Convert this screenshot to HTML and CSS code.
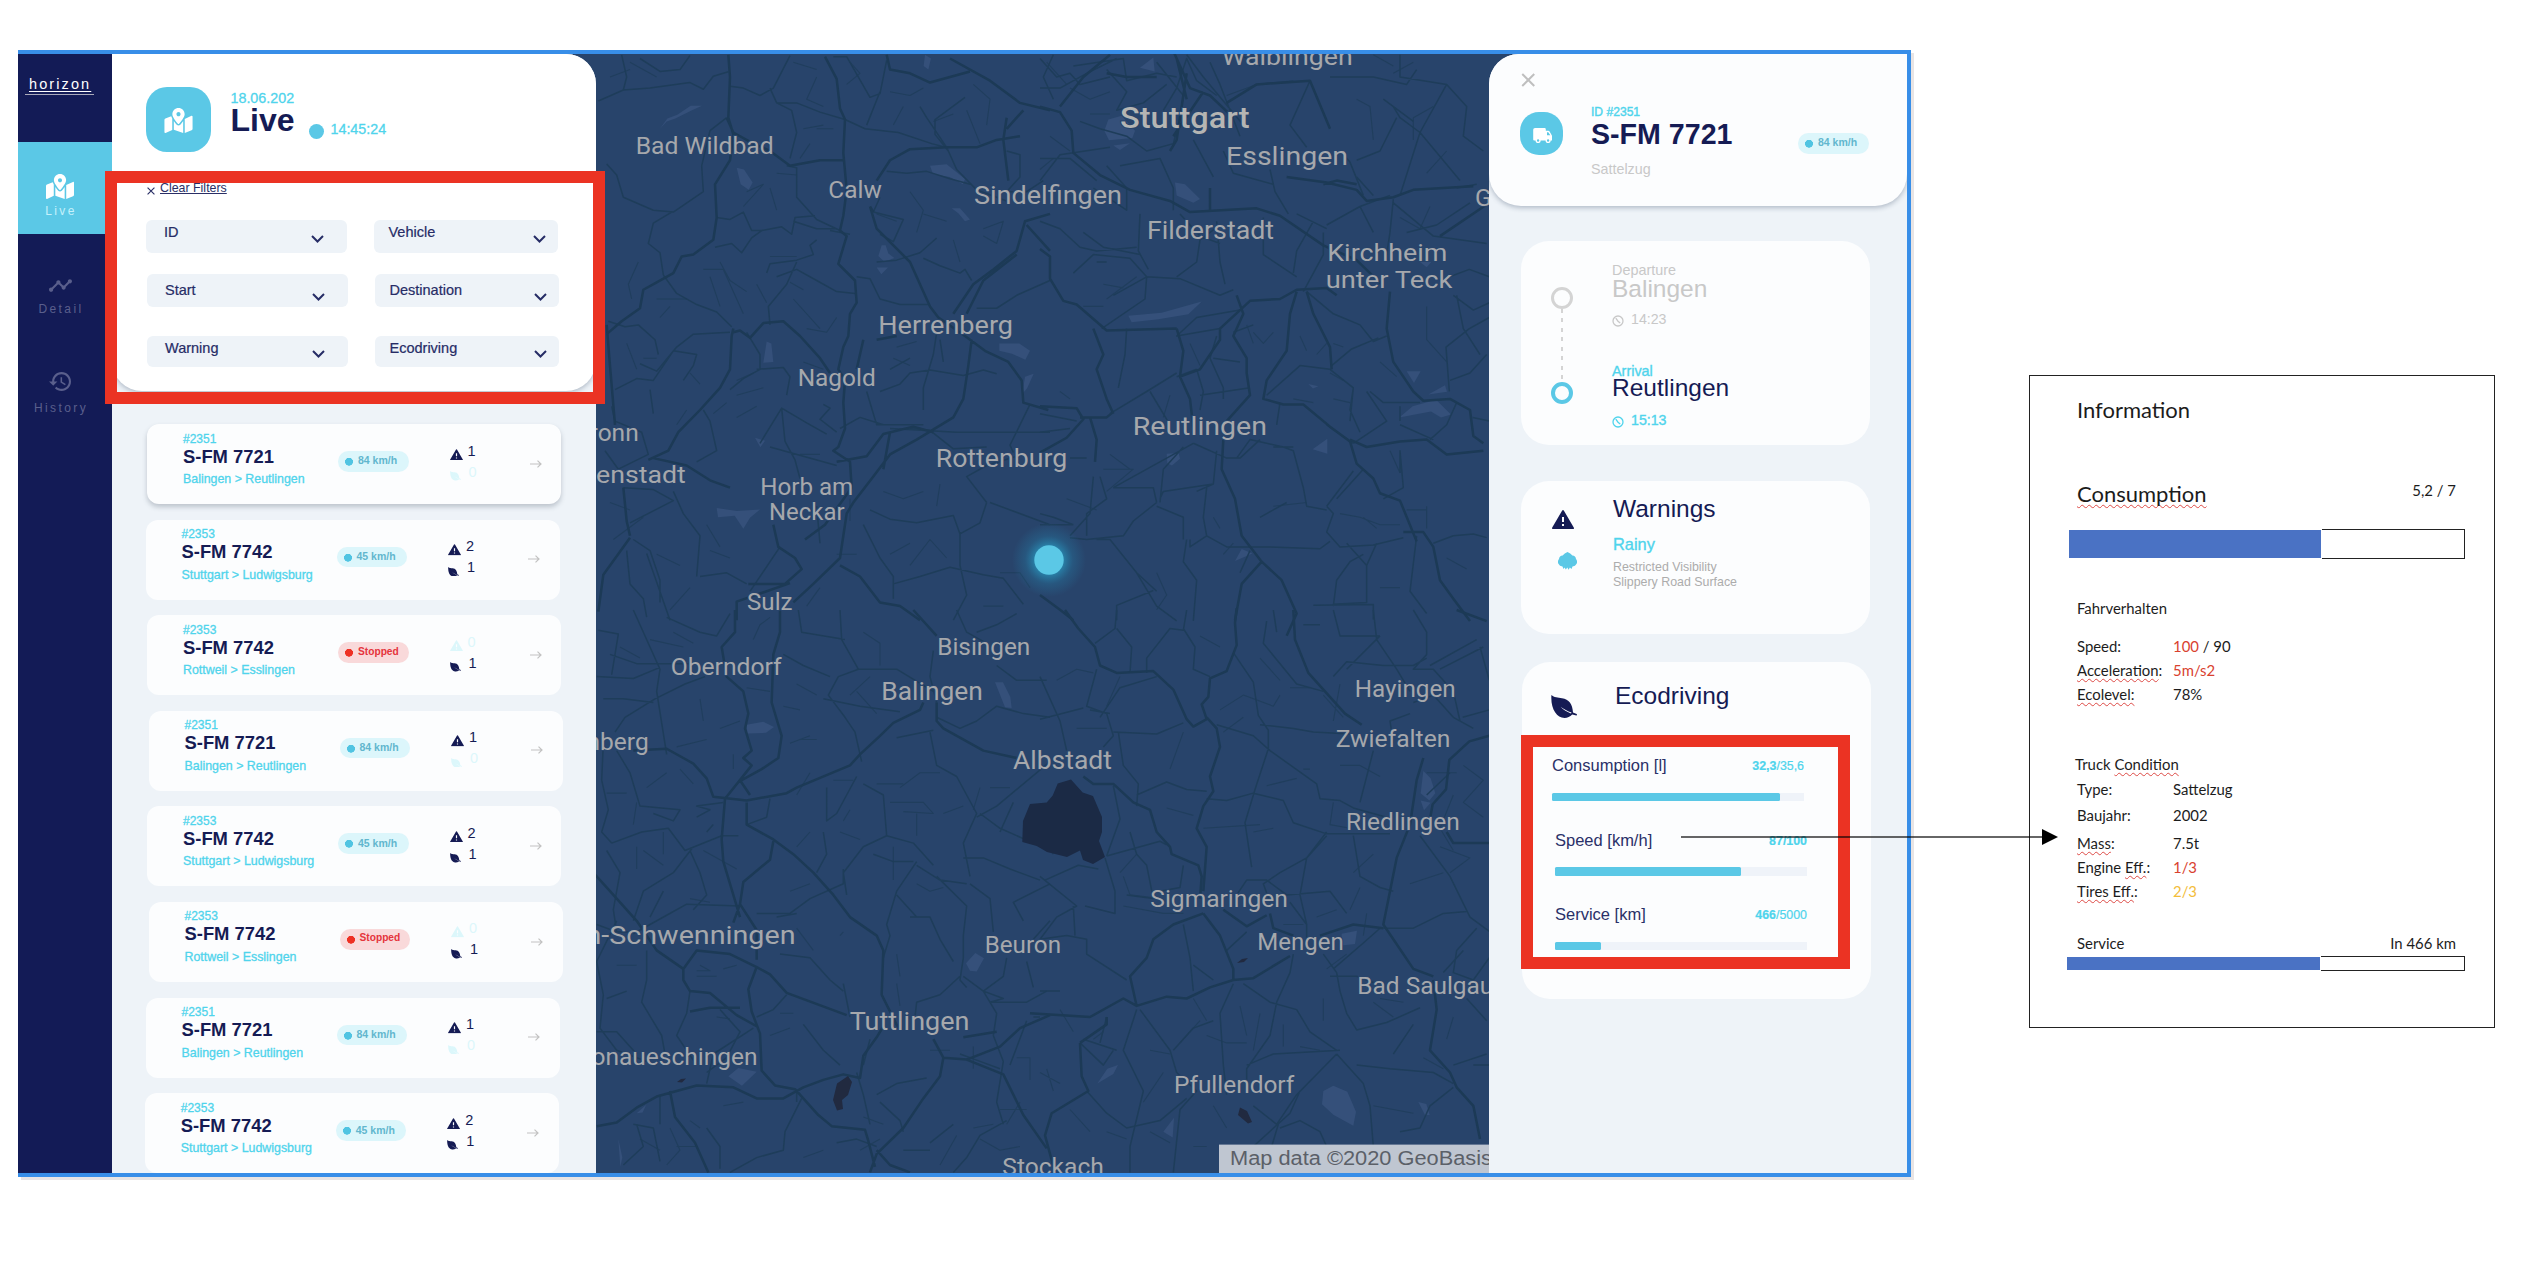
FILE: index.html
```html
<!DOCTYPE html>
<html lang="en">
<head>
<meta charset="utf-8">
<title>horizon – Live</title>
<link rel="stylesheet" href="styles.css">
</head>
<body>
<svg class="defs" width="0" height="0" aria-hidden="true">
  <symbol id="i-map" viewBox="0 0 576 512"><path d="M288 0c-69.59 0-126 56.41-126 126 0 56.26 82.35 158.8 113.9 196.02 6.39 7.54 17.82 7.54 24.2 0C331.65 284.8 414 182.26 414 126 414 56.41 357.59 0 288 0zm0 168c-23.2 0-42-18.8-42-42s18.8-42 42-42 42 18.8 42 42-18.8 42-42 42zM20.12 215.95A32.006 32.006 0 0 0 0 245.66v250.32c0 11.32 11.43 19.06 21.94 14.86L160 448V214.92c-8.84-15.98-16.07-31.54-21.25-46.42L20.12 215.95zM288 359.67c-14.07 0-27.38-6.18-36.51-16.96-19.66-23.2-40.57-49.62-59.49-76.72v182l192 64V266c-18.92 27.09-39.82 53.52-59.49 76.72-9.13 10.77-22.44 16.95-36.51 16.95zm266.06-198.51L416 224v288l139.88-55.95A31.996 31.996 0 0 0 576 426.34V176.02c0-11.32-11.43-19.06-21.94-14.86z"/></symbol>
  <symbol id="i-leaf" viewBox="0 0 26 23"><path fill-rule="evenodd" d="M.4 0C3 2.600 7 2.600 11 3.200c7 1 10.500 5.800 11 14.300l3.700 1.500q.6.900-.3 1.600l-4.200-1C19 22 16.500 23 13.500 23 5.500 22.500-.5 14 .4 0zM9.500 11.800c2.500 2.600 6 5 10.500 6.800l.5-1c-4-1.400-7.500-3.300-11-5.800z"/></symbol>
  <symbol id="i-warn" viewBox="1 2 22 19"><path d="M1.6 21h20.8q.9-.3.5-1.200L12.800 2.600q-.8-1.200-1.600 0L1.100 19.800q-.3.900.5 1.200zm11.400-3h-2v-2h2v2zm0-4h-2v-5h2v5z"/></symbol>
  <symbol id="i-line" viewBox="1 6 22 12"><path d="M23 8c0 1.1-.9 2-2 2-.18 0-.35-.02-.51-.07l-3.56 3.55c.05.16.07.34.07.52 0 1.1-.9 2-2 2s-2-.9-2-2c0-.18.02-.36.07-.52l-2.55-2.55c-.16.05-.34.07-.52.07s-.36-.02-.52-.07l-4.55 4.56c.05.16.07.33.07.51 0 1.1-.9 2-2 2s-2-.9-2-2 .9-2 2-2c.18 0 .35.02.51.07l4.56-4.55C8.02 9.36 8 9.180 8 9c0-1.1.9-2 2-2s2 .9 2 2c0 .18-.02.36-.07.52l2.55 2.55c.16-.05.34-.07.52-.07s.36.02.52.07l3.55-3.56C19.02 8.35 19 8.18 19 8c0-1.1.9-2 2-2s2 .9 2 2z"/></symbol>
  <symbol id="i-history" viewBox="1 3 21 18"><path d="M13 3c-4.97 0-9 4.03-9 9H1l3.89 3.89.07.14L9 12H6c0-3.87 3.13-7 7-7s7 3.13 7 7-3.13 7-7 7c-1.93 0-3.68-.79-4.94-2.06l-1.42 1.42C8.27 19.99 10.51 21 13 21c4.97 0 9-4.03 9-9s-4.03-9-9-9zm-1 5v5l4.28 2.54.72-1.21-3.5-2.08V8H12z"/></symbol>
  <symbol id="i-chev" viewBox="0 0 13 8"><path d="M1 1l5.500 5.500L12 1" fill="none" stroke="currentColor" stroke-width="2"/></symbol>
  <symbol id="i-x" viewBox="0 0 14 14"><path d="M1 1l12 12M13 1L1 13" fill="none" stroke="currentColor" stroke-width="2"/></symbol>
  <symbol id="i-arrow" viewBox="0 0 12 8"><path d="M0 4h11M7.500 .6L11 4 7.500 7.400" fill="none" stroke="currentColor" stroke-width="1.200"/></symbol>
  <symbol id="i-truck" viewBox="0 0 19 15"><path fill-rule="evenodd" d="M2 0h9.500q1.300 0 1.300 1.300V2.800h2.500q.8 0 1.300.7L18.600 7q.4.500.4 1.100v4.400h-1.300a2.600 2.600 0 0 1-5.200 0H7.700a2.600 2.600 0 0 1-5.200 0H1.300Q.2 12.500.2 11.400V1.800Q.2 0 2 0zM14 4.300v3h3.300L15.300 4.300zM5.100 11.300a1.200 1.200 0 1 0 0 2.400 1.200 1.200 0 0 0 0-2.400zM15.100 11.300a1.200 1.200 0 1 0 0 2.400 1.200 1.200 0 0 0 0-2.400z"/></symbol>
  <symbol id="i-clock" viewBox="0 0 12 12"><path d="M6 1a5 5 0 1 0 0 10A5 5 0 0 0 6 1zM3.800 3.200L6 6.200l2.200 1.800" fill="none" stroke="currentColor" stroke-width="1.300"/></symbol>
  <symbol id="i-rain" viewBox="0 0 19 18"><path d="M4.500 14.500A4.600 4.600 0 0 1 1 7 4 4 0 0 1 4.600 3.500 Q6.500 1 9.500 0 Q12.500 1 14.400 3.500 A4 4 0 0 1 18 7a4.600 4.600 0 0 1-3.500 7.500l-1 2.500-1.600-1.500-1.300 2.300-1.300-2.300-1.500 2-1.200-2-1.100 1.500z"/></symbol>
</svg>

<main class="board">
  <section class="window">
    <nav class="nav">
      <div class="logo"><span>horizon</span></div>
      <a class="nav-item active"><svg class="ic-map"><use href="#i-map"/></svg><span>Live</span></a>
      <a class="nav-item detail"><svg class="ic-line"><use href="#i-line"/></svg><span>Detail</span></a>
      <a class="nav-item history"><svg class="ic-hist"><use href="#i-history"/></svg><span>History</span></a>
    </nav>

    <section class="side">
      <header class="side-head">
        <div class="live">
          <div class="live-icon"><svg><use href="#i-map"/></svg></div>
          <div class="live-title"><span class="date">18.06.202</span><h1>Live</h1></div>
          <i class="live-dot"></i><span class="time">14:45:24</span>
        </div>
        <div class="clear"><svg><use href="#i-x"/></svg><u>Clear Filters</u></div>
        <div class="frow r1"><div class="sel">ID<svg><use href="#i-chev"/></svg></div><div class="sel b">Vehicle<svg><use href="#i-chev"/></svg></div></div>
        <div class="frow r2"><div class="sel">Start<svg><use href="#i-chev"/></svg></div><div class="sel b">Destination<svg><use href="#i-chev"/></svg></div></div>
        <div class="frow r3"><div class="sel">Warning<svg><use href="#i-chev"/></svg></div><div class="sel b">Ecodriving<svg><use href="#i-chev"/></svg></div></div>
      </header>
      <div class="list">
        <article class="card selected"><div class="veh"><span>#2351</span><b>S-FM 7721</b><span class="route">Balingen &gt; Reutlingen</span></div><div class="pill">84 km/h</div><div class="counts"><p><svg class="w"><use href="#i-warn"/></svg>1</p><p class="off"><svg class="l"><use href="#i-leaf"/></svg>0</p></div><svg class="go"><use href="#i-arrow"/></svg></article>
        <article class="card nl"><div class="veh"><span>#2353</span><b>S-FM 7742</b><span class="route">Stuttgart &gt; Ludwigsburg</span></div><div class="pill">45 km/h</div><div class="counts"><p><svg class="w"><use href="#i-warn"/></svg>2</p><p><svg class="l"><use href="#i-leaf"/></svg>1</p></div><svg class="go"><use href="#i-arrow"/></svg></article>
        <article class="card"><div class="veh"><span>#2353</span><b>S-FM 7742</b><span class="route">Rottweil &gt; Esslingen</span></div><div class="pill stop">Stopped</div><div class="counts"><p class="off"><svg class="w"><use href="#i-warn"/></svg>0</p><p><svg class="l"><use href="#i-leaf"/></svg>1</p></div><svg class="go"><use href="#i-arrow"/></svg></article>
        <article class="card nr"><div class="veh"><span>#2351</span><b>S-FM 7721</b><span class="route">Balingen &gt; Reutlingen</span></div><div class="pill">84 km/h</div><div class="counts"><p><svg class="w"><use href="#i-warn"/></svg>1</p><p class="off"><svg class="l"><use href="#i-leaf"/></svg>0</p></div><svg class="go"><use href="#i-arrow"/></svg></article>
        <article class="card"><div class="veh"><span>#2353</span><b>S-FM 7742</b><span class="route">Stuttgart &gt; Ludwigsburg</span></div><div class="pill">45 km/h</div><div class="counts"><p><svg class="w"><use href="#i-warn"/></svg>2</p><p><svg class="l"><use href="#i-leaf"/></svg>1</p></div><svg class="go"><use href="#i-arrow"/></svg></article>
        <article class="card nr"><div class="veh"><span>#2353</span><b>S-FM 7742</b><span class="route">Rottweil &gt; Esslingen</span></div><div class="pill stop">Stopped</div><div class="counts"><p class="off"><svg class="w"><use href="#i-warn"/></svg>0</p><p><svg class="l"><use href="#i-leaf"/></svg>1</p></div><svg class="go"><use href="#i-arrow"/></svg></article>
        <article class="card nl"><div class="veh"><span>#2351</span><b>S-FM 7721</b><span class="route">Balingen &gt; Reutlingen</span></div><div class="pill">84 km/h</div><div class="counts"><p><svg class="w"><use href="#i-warn"/></svg>1</p><p class="off"><svg class="l"><use href="#i-leaf"/></svg>0</p></div><svg class="go"><use href="#i-arrow"/></svg></article>
        <article class="card nl2"><div class="veh"><span>#2353</span><b>S-FM 7742</b><span class="route">Stuttgart &gt; Ludwigsburg</span></div><div class="pill">45 km/h</div><div class="counts"><p><svg class="w"><use href="#i-warn"/></svg>2</p><p><svg class="l"><use href="#i-leaf"/></svg>1</p></div><svg class="go"><use href="#i-arrow"/></svg></article>
      </div>
    </section>

    <svg class="map" viewBox="596 54 893 1119">
      <defs><radialGradient id="glow"><stop offset=".35" stop-color="#2a9cc4" stop-opacity=".75"/><stop offset=".65" stop-color="#2583ad" stop-opacity=".3"/><stop offset="1" stop-color="#2583ad" stop-opacity="0"/></radialGradient></defs>
      <!-- built-up and forest patches -->
      <g fill="#35507a">
        <g transform="translate(590 40) scale(.33333 .37)">
          <path d="M210 240l22-28 30-10 40-24 34 0-30 12-50 22-26 8zM440 345l22 5 26 35-12 20-24-15zM1020 340l50-4 55 40-6 14-40-20-50-8zM1085 455l25 0 30 30-15 5-20-22zM875 555l12 0 8 22 18 12-30 10-18-15zM860 615l34 0-20 18zM530 815l14 5 6 50-30 2zM1228 820l60 0 32 20-14 24-40-16-38-8zM1305 910l26-8-20 40-14 14zM380 1265l60 8 70-4-30 22-20 30-26-35-50 4zM495 1075l30 8-14 18zM1005 40l18 10-8 30-14-10z"/>
        </g>
        <g transform="translate(1040 40) scale(.33333 .37)">
          <path d="M300 75l40-28 4 38zM205 215l40-10 40 40-8 20-70 6-14-26zM220 285l50-6-30 18zM405 385l30 5 45 40-20 10-50-20zM265 745l100-8 120-30-40 34-90 14-80 8zM1100 895l42 0-20 32zM1165 958l50-25 6 18zM1078 1020l40-30 70-18 45 40-30 8-30-16-60 10zM818 1106l44-28 0 40zM380 1118l36-2 4 16-24 18-14-6zM805 930l30 6-16 6zM585 1408l20-32 32 12zM1140 600l34 0-14 14z"/>
        </g>
        <g transform="translate(590 610) scale(.33333 .37)">
          <path d="M1215 195l24 0 22 40 4 30-20-2zM470 310l50-8 32 14-24 16-56 2zM1128 955l28-28 26 14-22 36-20-2zM415 1260l30-22 55 10-44 38zM140 1360l28-22-10 20zM85 1430l12 50-6 25z"/>
        </g>
        <g transform="translate(1040 610) scale(.33333 .37)">
          <path d="M1150 435l22 20 14 40-18 20-26-20zM1142 515l30 6-20 20zM850 1300l30-14 42 16 26 54-8 38-60-30-34-28zM172 1280l30-40 32-10-14 24zM370 1410l32-38-4 54zM905 875l46-8-6 36-40 4zM1135 1330l24 5 10 30-14 0z"/>
        </g>
      </g>
      <!-- minor roads -->
      <g class="minor">
        <g transform="translate(590 40) scale(.33333 .37)">
          <path d="M95 40l15 60-10 35-75 30M100 135l80-5 120-15 40 18 30-35 45-12M150 50l60 35 60-5 30-38M420 125l40 5 50 20 40-20 50-88M540 130l20 40 45 20 15 60-20 70M560 170l60 0 70 25 75 20 60 25 100 10 100 30 50 12M730 45l40 0 70 110 30-10 20-90M830 230l40-90M590 340l30 5 0 80 60 60 70 30M410 210l-50 35-25 95 5 70-90 55-60-5-90-35-20-60-30-30M245 465l-55 30-15 55 35 25 10 60M220 635l40 50 60 30 60 20 45 40M380 480l40 5 40-20 25 50 30 0 60-10 30 20 10-45 60-5M610 490l70 20 60 0M375 560l50-10 30 25 30-40 30-20M680 540l-20 15 10 25-50 15-80 10-10 25M620 600l-30 60-55 60 5 50M560 640l60-20 60 30 60 30 55 5M720 515l60 10M870 425l-20 40 90 20-30 60-40-20M890 355l60 5 60-5 70 20 60 15M1000 590l50 20 60 20 15-10 20 30M860 600l60-5 70-20 50-40M800 640l40 5 30 55 60 15 90 0M1075 300l-40-45 0-40 90-60M990 180l20 30 60 80M1070 290l30 60 60 55 90 30M1250 300l40 10 0 60-40 40 60 0 50-30M1380 650l-100 40-60 35-60 0"/>
          <path d="M55 760l50 15 40-5 50 40 10 40M420 790l-110 5-50 35-60 65-50-20M250 840l70 10-10 30-30 40M500 890l80-5 20 25-10 50M420 945l40-30 50-25 0-40-40-60M75 945l65-30 50 5 60-80M340 1000l20 30 20 80-60 30M510 1090l65-95 75 40 60 30M575 995l10 90 30 50 15 50M190 1010l-10-65M45 1110l40 50 90-40-20-60-80-30-10-40M700 985l20 10-30 30 50 35M870 950l60-20 30-30 60-8 100 15 60-15 40 10M1000 1000l0-60 30-90 10-60M1060 870l-10-60M960 860l-60 30M830 950l30 90 140 0M900 1050l200 10 280 0M1320 985l-60 110 10 20M960 1050l60 5 70 50 100-5M1190 1250l-60-70 60-30 90-25M1200 1250l180 60M1190 1250l-20 55-60 30-20-50-110 20-80-10-60-25M1110 1330l0 90 20 80-40 68M820 1310l50 90 40 50 0 60M910 1470l80-20 90-25 100 20 60 10 60 70M250 1220l30 60 50 60-10 110M100 1210l90 5 60 30-130 60M130 1350l50 30 30 80 0 60M110 1380l10 90 40 40 10 50M330 1450l80-10 60 30M680 1260l10 100M570 1370l-90 120M240 1568l-70-180M540 1100l200 50M880 1040l-70-20-60 30"/>
          <path class="t" d="M60 100l60-20M120 60l80 40M680 100l-30 60 50 20M610 60l70 20M780 60l30 30-40 30M900 140l60 10 40-20M940 180l-30 50M1150 120l50 40-10 70M1090 200l-60 20M1130 190l40 90M680 240l50 0M660 280l-30 40M560 360l60 5M540 400l20 60M470 410l50-20-60 60M640 240l60-10M960 410l40 50-20 60M860 470l60 20M1000 470l70 20M1090 540l20 60M1180 510l60-20-20 60-40-20M145 600l-30 60 10 40M340 620l60 0 60 120M360 640l30 80M500 660l30 50M390 600l30 50 50 30M610 700l80 80M650 780l60 10 30-40M540 585l80 0M600 655l40 20M200 700l90 0M240 720l-30 30M110 820l30 70M160 860l40 0M490 900l-50 20M520 940l-80 20M300 900l30 30M290 1000l-30 40M370 1010l40-30M440 1020l60-30M910 860l50 20M920 830l60-15M60 1250l60 20M160 1290l-90 60M350 1310l40 60M360 1380l60 20M200 1390l70 30M880 1220l60 20 60-20M1040 1260l10-60M900 1390l60-30M960 1420l60-70 50 50M740 1390l60 0M690 1480l-40 50M300 1480l-60 60M780 1300l0-60M1230 1440l60 0 30 40M1180 1530l60 0M690 1120l-60 0M640 870l60 20"/>
        </g>
        <g transform="translate(1040 40) scale(.33333 .37)">
          <path d="M0 50l50 50 40-10 30 30 90-20M40 40l-30 60 30 60M0 130l60 0 80-40 90-40M100 70l150-20 10 60 90-20 60 10M200 80l60 60-30 50 80-20 70-50M370 190l40-60 30-80 30 60 60 40M350 60l80 90-10 60-20 70-80 20-60-40-80-20-60-20M440 40l50 60 120 130M510 60l30 60 60 140M460 270l60 100M550 300l30 60 120 30M690 350l15 60 40 60M870 100l130 0 100 20 30-40M0 320l90 0 80 60M200 340l60 60 0 60-100-60M240 340l120-20 40 80 0 60M0 490l60 20 60 50 50 10 120-10M0 380l60-70 150-20M130 520l60 40 110 20M100 630l60-50 110 10 50 50-100 50M170 600l30 0M320 640l-5 60-130 80M320 640l100 5 120 45 40-15M300 470l-5 100 30 50M410 640l60-40 10-60 60-40M530 490l10 110 15 60M420 470l60 60 60 20M670 480l0 100 100 60M820 490l-50 80-10 60M850 520l0 60-60 100M800 680l80 60 80 30 40 45 40-15M875 880l60-45 80-30M770 470l90 40M960 450l40 70M860 500l100-50 90-30M1060 430l-10 90-10 60M970 420l-40-90-30-30M950 325l70-25 50-90M1060 180l20 30 60 40 120 130M1030 160l90 60M810 110l-60 120 50 60M950 370l50 50M1140 250l-60 170M1220 120l-80 130M1080 40l0 60 140 20 60 60-10 80 60 40M1250 400l60-10M1060 440l120 90 160 20M1100 520l90-20 100-60M1250 690l20 90 50 70M1348 640l-60-20-90 30M1240 690l60 40 48-20M1348 750l-60 30-70 50 10 120M1230 920l60-20 50-50"/>
          <path d="M260 780l-5 70-20 90M410 900l-90 50-110 60M330 950l60 90M470 890l20 60-10 50M480 960l150-20M530 800l-20 60 40 80 0 30M410 910l60-20M520 860l80 10M580 790l60-20M540 780l-130 20 60-50 130-20M680 960l100-80 90 10 70 50-10 90M720 980l-10 60M990 950l40 30 110 0M940 940l-10 60 30 60M940 1090l100-60-60-80M860 1040l80 50M1080 1040l100 40M1080 990l0 40M1250 980l-30 60-50 40M1348 1030l-50-10M460 1090l100 40 40 0 60-50M590 1130l40-50 100 20 30 10 30 100 10 50 60 10M700 1100l60 0M530 1110l-10 90-50 20M520 1200l-150 20-10 20M430 1100l-60 60-10 90M460 1090l-240 120M220 1210l120 0 10 40M350 1250l-70 50-30 40-110 10-50-5M350 1260l80 30 0 60M500 1210l-10 80 10 50-50 30 0-20M440 1350l-10 60 40 50-10 110M500 1340l60 30 130 0 150 5 30-20M860 1260l20 20-20 50 40 40 100-5 90-20M940 1165l-80 95M970 1160l-80 80M660 1290l80-40M920 1360l60 60 30-60M880 1530l10-70 40-50 40-20M980 1420l0 100-100 5M1080 1170l0-60 10 100-60 30M1130 1340l-20 150 50 60M1180 1360l60-20 60-5 40 10M170 1350l40 0 80 90 60 50M290 1440l60 90 60 40M230 1568l0-40 110-40M600 1440l30-60M820 1528l180-2 0 40M0 1310l100 0M0 1010l110 20M0 1060l90-10M90 1130l50 0M160 1180l-10 100-60 60M180 1180l20 60-60 40 0 60M0 1280l40 10 60 20"/>
          <path class="t" d="M20 60l60 60M90 130l60 30 60-20M150 200l60 0M30 260l60 40M0 350l40-30M560 150l90-30 110-10M600 40l60 30M950 160l40 20 10 90M1000 40l60 30M1120 60l-60 30M1180 180l-60 30 0 60M1220 300l-60 60M1080 480l60 30 30-60M190 660l60 10M290 640l-90 60M130 720l60 0M450 820l30 60M640 790l30 30 30-30M620 770l20 50M780 800l20 40M880 820l30 10M830 850l30-30M1160 720l0 90 60 60M1020 870l50 40M870 900l40 20M60 950l30 20M390 960l-20 60M760 970l60 10M880 970l50 10M190 1160l90 0-80 60M210 1120l60 40M700 1260l100-10M900 1280l60 10 60 20 60 0M970 1290l40 30M1100 1270l60 0M1160 1260l0 60M1050 1110l30 60M350 1440l30 60-30 40M1020 1480l60 0M1220 1400l60 30M520 1290l20 30M550 1390l30-30M80 1240l90 30"/>
        </g>
        <g transform="translate(590 610) scale(.33333 .37)">
          <path d="M130 0l50 100 30 60-10 60 30 170M25 55l60 10-20 110M60 120l80 25 160 0M20 180l110 5 80-30M75 330l30-40 90-50 90-40 60-20M40 240l60 0 90 10M230 20l100 40 50 10 40-60M625 0l10 60 130 20M750 0l5 80 50 80-60 20-30 50 50 60 30 40 20 80M580 120l60 30 80 30M800 160l120 0 110 60M700 240l110 20 120 15M920 345l110-20M1030 110l-10 70 20 70M1100 0l30 60 60 30M1160 60l60-20 60-30M1220 150l60 40 90 0M1040 290l70 30 50-20 60-40 80 20 80 10M1020 330l20 90 60 30 60 100-40 80 20 90M1160 560l60-30 160-120M1380 650l-150-60-60-40M1230 600l40-80M40 360l-5 100 20 80-20 60 30 30M80 380l40 60 30 90 120 10-20 30-60-20M65 630l90-30 80-10 50 60 110-40 50 0M50 650l40 60-20 100 10 60M300 650l30 60 20 60-40 40M310 640l-60 70-90 50-30 80M320 560l40-20-40-10 80-10M350 600l20-20M540 510l-10 50-60 20M710 480l0 90 30-20 60-100M820 470l60 30 10 110 80 20 60 60M890 610l-70 30-60 70 10 60M700 600l10 60-30 50M760 700l0 40-100 40-60 40-100 0M450 800l-160-5-60 30-100 50M850 660l60 20 60 0M980 690l70 40 80 10M980 680l-60 80-30 90 10 30-20 60M1040 720l90 80-10 80 0 60-10 60 20 20M920 770l60 60M960 830l60 0 30 60 40 60M1120 670l60 0 80 30 90 30M1380 740l-110 50 30 50M1140 740l60 40 10 90M1380 840l-50 50M1110 990l-60 50-70 20-5 40M1120 990l60 40 40 60-10 60 30 70M1180 1030l60 20-40 10 110 0 60-30M1250 940l-10 50-60 40M1240 1220l-20 110 20 60M1110 1200l60 20 60 20M860 1310l60-30 90-15M870 1330l60 50 10 30M800 1250l20 60 20 80M740 1440l60-10 60 20M1130 1480l40-60 80-40M1020 1440l70-50M1130 1480l-40 40M940 1460l80 0"/>
          <path d="M170 920l0 80-15 60 60 90 10 50M80 840l-60 110 20 90-10 90 50 60 120 40M20 1140l60 0 60 60M50 1050l60-20M300 1030l-10 60-30 60 60 80M500 1100l50-20 40-40M570 930l90 10 60 60 40 30M760 1010l20 90M350 1280l20-80 120-70M635 1320l-50 90-5 50-80 20-80 40M210 1310l0 80M130 1390l60 10 20 90M640 1120l60 70 50 40M20 850l60 20 60 0M180 830l40-70M560 830l60-10M350 1250l60-40 40-70-60-60M100 1500l60-50-20-60M350 1400l40 50 0 60M620 1300l0 30M820 1230l20-70M1310 950l20 70M1310 1110l-50 120"/>
          <path class="t" d="M90 100l60 30M180 80l100 20M250 60l60 30M490 80l20-40 30-20M820 60l50 30 0 60M840 180l-60 50M800 220l60 60M620 200l60 30M580 260l50 10M600 360l60-20M470 210l70 10M330 240l10 60M260 370l90-20M390 320l60-20M270 430l40 40M230 440l-60 40M430 390l0 40M50 495l60 0M130 580l10-60M630 350l50 0M660 440l-40 60M730 460l60 0M750 600l60 20M780 540l-20 30M620 640l40-40M860 470l80 0M930 480l60-40 60 0M900 520l100 0 30 30-90-5M1060 550l60-20M980 550l0 60M910 640l0 90M980 740l40 20 40-10M1200 480l60 0M1170 480l-20 60M600 760l60-20M620 860l50 60M220 600l0 60M140 640l0 60M160 650l60 40M340 650l100 50M300 780l60 10M80 960l60 0M330 960l30 15-40 0M320 990l60 0M400 970l40-10M380 1100l40 5M570 1090l40 0M540 1150l60-20M640 1480l60-20M240 1400l30 60-40 40M150 1430l60 30M260 1450l60 0M300 1380l30 20M400 1340l60-10M820 1370l60 20M870 1430l-60 30M920 1010l10 60M1020 1190l60 0M1280 1210l40 0 0 60M1290 1330l-40 60M1170 1430l60 30 60-10M1150 1240l0-60M1100 1420l-50 80M920 930l10 60M750 880l10-10M1130 1100l-60 20M1150 1400l60-10M1230 1350l80 0"/>
        </g>
        <g transform="translate(1040 610) scale(.33333 .37)">
          <path d="M230 0l-5 50-60 40M230 50l45 50-5 70M440 0l-10 55-40-5-70 80 0 40M430 50l35 50-5 60 50 20M170 160l-30 100 60 20 20 60-30 30M0 295l130-30M150 270l60 10M0 180l60 120 20 80M180 290l60-80 110-30M220 330l130 5 80-30M235 330l15 90 45 50-5 60M290 500l90-35 60 20 60 5M500 510l60 5 80-20 90 20 30 60 100 30 190 0M580 115l60 80 15 90 30 40 0 50-40 110-30 90 20 120M530 310l110 30 50 40 140 90 10 40 60 5 40 20 100 25M660 310l100 10 60 10 110 5M680 30l-10 60 100 110 80 20M700 0l10 60M880 0l20 70 120 0M1000 0l10 80 60 80 40 60M790 40l50 0M920 160l100-90M880 180l40-40 110 10 90 0 40-20M1120 0l40 60 0 60-40 40 60 0 60 60 20 80M1200 160l130-60M1170 150l140-70M1320 100l28 90M1240 290l-60-60-60 20M1110 280l-60 20 10 60M1240 290l60 30M1348 270l-80 20M1000 380l-40 140M1230 440l-70 60M940 610l20 110 60 30 40 10M1140 610l90 110 60 110 60 40M1030 860l90 0 90-40 70-5M1310 860l-60 60-10 60 60 20 48-60M1210 980l60-60M860 610l-60 60-20 100 20 80 0 40M860 600l-60 70-80 40-50 30 20 50M590 770l30-40 60 0 60 40 130-10 50 60M750 790l50 60M0 600l40 60M200 665l160-40 20 10M200 665l40-100-20-90M195 670l30 90 0 60-90-20M15 730l100-40 60 10M0 720l110 80-60 30-50 60M100 800l5 80M0 890l80-10 60 10 0 40 120 70M270 600l20 60 30 30 20 90-80-10M430 690l-10 60-60 10M430 850l20 90 10 90M520 1000l-60-40M560 920l60-50M610 1010l80 50 80 20 40 60 80 50M580 1010l-40 80 10 140 10 80M760 930l-10 50-40 80-20 90-70 90 0 30M620 1230l80-30 200-10M850 930l40 50 10 50 20 60 30 45 90-20 100-40M880 970l90-70 50-40M870 990l80 0 60 20M0 1100l-20 0M200 1100l-20 70M290 1080l-40 110 60 110-40 150 0 70M300 1080l90 110 20 60 60 50-50 50-20 170M400 1190l60-60 60-20M120 1170l70 60 30-40M140 1300l60 60 60 40 100-20 80-60M890 1200l80 80 20 60 10 110M890 1200l-120 110-60 80-70-50M780 1300l-30 60-110 90M715 1390l-20 60M720 1400l60-20 60 30 20 40M950 1230l100 10 130 10 60 30M1240 1230l100-30M1240 1290l-70 50-30 60-60 10M1120 1120l-60 80M1280 1050l60 60M1300 1230l48 0M130 1160l100 30M0 1030l60 0"/>
          <path class="t" d="M50 190l60-30 50 10M200 260l40-80M110 320l90 0M430 330l-40 100M540 270l70-40 90 30 20-30M480 70l60 30M550 330l60-40M680 475l90-20M380 535l80 20M490 590l170-10M640 600l60-10M750 210l60 0M660 130l60 60M790 430l20 0M850 230l60 60M900 200l-20 100M900 420l60 0 60 30M880 520l-10 60 60 10M1160 440l90 0M1270 420l60 40-60 60 60 40M1240 500l-40 90 40 60M1200 640l90 30-60 40M1110 740l100-30M1000 660l-60 50M360 780l-90-10-20-50M290 660l-50 50M250 800l120 20 60 0M730 850l60 0M830 830l60-20M960 750l-30 60M980 820l-10 60M460 1050l40 60M480 1110l-60 60M600 1070l20 80M660 1090l-20 100M730 1120l0 60M560 1170l60 0M780 1180l60 10M850 1050l0 60M1000 1060l60 40M1020 1050l70 10M860 970l60-40M330 1190l60 10M500 1150l60 20M160 1160l30-20M20 1240l20 60M0 1250l60 30M90 1350l60 60M200 1410l60 20M520 1340l40 60M460 1450l40 0M1000 1340l120 20M1240 1100l-20 60M1150 1210l60 30M60 1080l40 60M330 1410l60 30M310 1330l60-80"/>
        </g>
      </g>
      <!-- major roads -->
      <g class="major">
        <g transform="translate(590 40) scale(.33333 .37)">
          <path d="M415 40l5 60-5 110 15 45-10 70-45 65 5 90-10 60-60 40-35 5-25 45-50 25-40 20-10 50-55 35-45 35M50 770l10 110 15 160M705 45l35 60 10 80 15 30-5 90 10 100-10 70-10 40 20 15-25 75 50 45 5 60-20 30-5 60-15 30-15 60 20 30-5 60 5 70-20 50-15 10 50 30 5 70-80 100-60 40M410 210l20 40 60 30 50 20 60 40 90-15 70 0M1080 50l120 60 90 60 90 20M890 40l10 40 60 10 60 25 120-30M860 380l40-55 60-30 110-5 90 0 60-20 70-10M1250 210l-10 60 15 110M1300 190l-50 50M840 450l20 60 100 90 60 120 25 30 80 50 60 40 70 30 40 50 5 60 75 20M850 465l-10-15M1090 740l60-80 60-40 70-50 25-80 75-20M1130 740l50-90 100-70M1310 500l70 70M430 790l20-5 30 20 40-40 60-5 50 40 60 60 30 40M55 765l0 0M430 780l-5 20-5 90-30 50-60 60-65 60-30 50-60 25M190 1130l100 20 70 40 60 20M1145 810l-10 70-15 90-30 50-110 60-80 40-50 60-60 70-20 30-10 60-10 60-80 70-60 50M550 1310l15 60 50 30 20 30-50 40-110 0M820 810l-20 80M750 1420l60 30 60 70 60 10 60 38M120 1340l-10-40-10-90M120 1345l-80 100-15 100M440 1568l0-50 160-50M860 810l60-10M900 1060l-20 100M740 1140l90-15 50-60 90-20 60 15"/>
        </g>
        <g transform="translate(1040 40) scale(.33333 .37)">
          <path d="M0 180l60 15 35 50 5 60 80 60 90 40 120 30 60 30 200-10 70 20 130 80 100 40 80 70M60 180l70-80 80-60M200 90l60 10 90 0M510 460l0-60M400 30l50 100 60 20 70 60M440 90l-30 180-20 30M490 140l-90 120M410 50l30 110M560 170l90-50 160-10 60 130M740 370l120 15 90 20 30 30 80-10 60-20 180-10M850 390l40-10 60 10M1200 530l148-90M590 690l20 50-30 60 40 60 0 40 10 60-70 70M420 910l60-20 60-80 0-30 60-50 30-25 90-5 50-25 90-5 30 20M770 680l-20 60-10 100-60 80-10 50 60 15 60 0 80 60 60 40 20 60 50 40 20 40 60 20 50 110M800 680l20 60 50 90 5 60M1050 680l-10 100 20 90 60 80 30 25 80-5 60 30 10 70 30 20M930 1080l50 20 100-15 80-5 60 40 110-10M410 780l-210 5-90-70-40-10-40-60 0-60-30-20M410 780l20 60-10 70 30 60 10 80M160 780l30 70-20 40 30 80 20 40M0 990l110 5 20 30-50 50-80 40M120 1020l80 0 20-15M550 1080l-5 80 40 80 20 100 60 70 60 50 30 60 15 30-30 60M665 1410l-60 60-20 98M1090 1330l60 0 30 40 20 90 40 50 50 60M0 1500l60 40 40 28M150 1020l20 60-5 60"/>
        </g>
        <g transform="translate(590 610) scale(.33333 .37)">
          <path d="M435 0l0 60-40 40 15 80 50 40 15 60-10 40 20 60-25 20 25 20-80 90-10 110 5 60 30 90 20 60M570 0l0 60-20 60-5 130 30 90-10 60-50 30-60 30M550 0M970 0l70 70M130 380l100-5 80 40 40 40 20 50 100 10 120-20 30-15 160-60 30-30 60-50 40-35 80-35 10-20M450 460l30 40M470 520l0 60 80 40 60 40 60 50 60 60 50 60 80 50 20 40-5 120 50 90M550 625l-10 50-80 60-10 60 50 70 0 80M450 795l-20 50M0 700l60 60 80 80 60 80 80 50 40-50 100 10 80 35 40 20 50 50 180 60M500 965l-25 60 10 60 25 60 5 100 40 40 60 10 70 70 40 30 100 10 10 30 20 70M280 970l0 30 20 30 60 5 80 60 60 30M300 1085l60-10 90 0M20 1395l60-10 60-40 60-30 120-30 110 5 70 30 80 0 60-30 60-20 60-15 50 10 10-60 40-50 20-30M240 1300l15 70 60 70 40 80M1040 250l0 50 20 20 120 60 100 20M1030 1160l30 50 70 5 110 40 60 110 70 90M1060 1210l-10 50-50 60-60 80-80 70-20 50M1130 1215l100-35 60-50 90-35M860 1460l40 40 60 20M1120 1155l100-15"/>
        </g>
        <g transform="translate(1040 610) scale(.33333 .37)">
          <path d="M75 0l40 50 50 50 15 50 50 20 110-5 60 50 40 80 20 20 40-20-15-40 20-20 5-50 50-20 30-70-5-60 5-40M500 290l30 30 10 50-30 80 10 40-30 40-20 60 30 50-5 60-5 60M130 450l30 20 60 0 60 50 50 20 20 60 40 40 5 20 80 30 10 30-5 60M760 0l5 80 40 90 60 60 50 50 50 30M1150 400l-20 60-20 120-40 90-40 180 30 40 60 80 60 20M1348 340l-60 15-60 50-10 80-40 40-10 50M1250 0l90 30M1220 600l20 30 108 0M840 880l100-30 90 10M690 820l10 40 60 20M550 810l70 45 60-30M490 820l-90 30-60 40-20 50-50 50 20 80-40-20-100 50-180-10M490 820l50 60 40 90 0 30 60-5 110-60M290 1070l90-25 60 5 70-30 70-20M1180 1000l10 80-20 110 60 60 20 40 50 50 20 90M120 1170l5 90 20 40-110 60-20 60 30 100M200 1100l0 20-80 50M330 545l0 0"/>
        </g>
      </g>
      <!-- restricted zones -->
      <g fill="#1b2a45">
        <path d="M1046.700 802.400l6-7 5-12 13.300-4 11.700 13 10.300 3.700 9 21v15l-3 9 6 16-12 7-10-4-3-9.500-13 6.500-20-5-10.300-6-14.400-4 .7-21 7-17z"/>
        <path fill="#212a40" d="M848 1076l4 6-4 13-6 5 1 9-6 1.500-4-10.500 4-16.500zM1240 1107.600l7 3.400 5 11-4 1.500-10-8.500zM1237 963l5-4 6-1-4 4zM677 1082l4-3 5-.5-4 4z"/>
      </g>
      <g class="labels" transform="translate(-1 -1.200)">
        <text x="1222.700" y="66.600" textLength="131" lengthAdjust="spacingAndGlyphs">Waiblingen</text>
        <text class="xl" x="1121" y="129" textLength="129.500" lengthAdjust="spacingAndGlyphs">Stuttgart</text>
        <text class="m" x="1227" y="165.800" textLength="122" lengthAdjust="spacingAndGlyphs">Esslingen</text>
        <text x="636.700" y="155.400" textLength="138" lengthAdjust="spacingAndGlyphs">Bad Wildbad</text>
        <text x="829.300" y="199" textLength="53.500" lengthAdjust="spacingAndGlyphs">Calw</text>
        <text class="m" x="975" y="205.400" textLength="148" lengthAdjust="spacingAndGlyphs">Sindelfingen</text>
        <text class="m" x="1148" y="240" textLength="127" lengthAdjust="spacingAndGlyphs">Filderstadt</text>
        <text x="1328.300" y="262" textLength="120" lengthAdjust="spacingAndGlyphs">Kirchheim</text>
        <text x="1326.700" y="289" textLength="126.600" lengthAdjust="spacingAndGlyphs">unter Teck</text>
        <text x="1476" y="207">G</text>
        <text class="m" x="879.300" y="334.800" textLength="134.700" lengthAdjust="spacingAndGlyphs">Herrenberg</text>
        <text x="798.700" y="387.700" textLength="78" lengthAdjust="spacingAndGlyphs">Nagold</text>
        <text class="m" x="1133.700" y="435.800" textLength="134.300" lengthAdjust="spacingAndGlyphs">Reutlingen</text>
        <text x="639.700" y="442" text-anchor="end">ronn</text>
        <text x="597" y="484.700" textLength="89.700" lengthAdjust="spacingAndGlyphs">enstadt</text>
        <text class="m" x="936.700" y="468.400" textLength="131.500" lengthAdjust="spacingAndGlyphs">Rottenburg</text>
        <text x="761.300" y="496" textLength="93" lengthAdjust="spacingAndGlyphs">Horb am</text>
        <text x="770" y="521" textLength="75.500" lengthAdjust="spacingAndGlyphs">Neckar</text>
        <text x="748" y="610.800" textLength="45.500" lengthAdjust="spacingAndGlyphs">Sulz</text>
        <text x="938.300" y="656.600" textLength="93" lengthAdjust="spacingAndGlyphs">Bisingen</text>
        <text x="671.700" y="676.600" textLength="111" lengthAdjust="spacingAndGlyphs">Oberndorf</text>
        <text class="m" x="882.300" y="701" textLength="101.500" lengthAdjust="spacingAndGlyphs">Balingen</text>
        <text x="1355.700" y="698" textLength="101" lengthAdjust="spacingAndGlyphs">Hayingen</text>
        <text x="1336.700" y="748" textLength="114.600" lengthAdjust="spacingAndGlyphs">Zwiefalten</text>
        <text x="649.700" y="751.700" text-anchor="end">nberg</text>
        <text x="1014" y="769.800" textLength="99" class="m" lengthAdjust="spacingAndGlyphs">Albstadt</text>
        <text x="1347" y="830.800" textLength="113.700" lengthAdjust="spacingAndGlyphs">Riedlingen</text>
        <text x="1151.300" y="908" textLength="137.500" lengthAdjust="spacingAndGlyphs">Sigmaringen</text>
        <text x="586.500" y="944.800" textLength="210" lengthAdjust="spacingAndGlyphs" class="m">n-Schwenningen</text>
        <text x="985.700" y="954" textLength="76.300" lengthAdjust="spacingAndGlyphs">Beuron</text>
        <text x="1258.300" y="951" textLength="86.500" lengthAdjust="spacingAndGlyphs">Mengen</text>
        <text x="1358.300" y="995.500" textLength="136" lengthAdjust="spacingAndGlyphs">Bad Saulgau</text>
        <text class="m" x="850.700" y="1031" textLength="119.700" lengthAdjust="spacingAndGlyphs">Tuttlingen</text>
        <text x="592.500" y="1065.800" textLength="166" lengthAdjust="spacingAndGlyphs">onaueschingen</text>
        <text x="1175" y="1094.600" textLength="120.300" lengthAdjust="spacingAndGlyphs">Pfullendorf</text>
        <text x="1003.300" y="1176" textLength="101.500" lengthAdjust="spacingAndGlyphs">Stockach</text>
      </g>
      <circle cx="1049" cy="560" r="37" fill="url(#glow)"/>
      <circle cx="1049" cy="560" r="14.700" fill="#5bc8e6"/>
      <rect x="1219" y="1144.600" width="270" height="29" fill="#bfc6d1"/>
      <text class="credit" x="1230" y="1165" textLength="262" lengthAdjust="spacingAndGlyphs">Map data ©2020 GeoBasis</text>
    </svg>

    <aside class="detailp">
      <header class="dp-head">
        <svg class="close"><use href="#i-x"/></svg>
        <div class="dp-row">
          <div class="truck"><svg><use href="#i-truck"/></svg></div>
          <div class="dp-title"><span class="cy">ID #2351</span><b>S-FM 7721</b><span class="gr">Sattelzug</span></div>
          <div class="pill">84 km/h</div>
        </div>
      </header>
      <section class="box trip">
        <div class="track"><i></i><s></s><i class="on"></i></div>
        <div class="stops">
          <div class="stop1"><span>Departure</span><h2>Balingen</h2><p><svg><use href="#i-clock"/></svg>14:23</p></div>
          <div class="stop2"><span>Arrival</span><h2>Reutlingen</h2><p><svg><use href="#i-clock"/></svg>15:13</p></div>
        </div>
      </section>
      <section class="box warnings">
        <div class="wicons"><svg class="w"><use href="#i-warn"/></svg><svg class="r"><use href="#i-rain"/></svg></div>
        <div class="wtext"><h2>Warnings</h2><h3>Rainy</h3><p>Restricted Visibility</p><p>Slippery Road Surface</p></div>
      </section>
      <section class="box eco">
        <div class="eco-head"><svg><use href="#i-leaf"/></svg><h2>Ecodriving</h2></div>
        <div class="meter first"><p><span>Consumption [l]</span><em><b>32,3</b>/35,6</em></p><div class="bar"><i style="width:90.3%"></i></div></div>
        <div class="meter"><p><span>Speed [km/h]</span><em><b>87/100</b></em></p><div class="bar"><i style="width:73.900%"></i></div></div>
        <div class="meter"><p><span>Service [km]</span><em><b>466</b>/5000</em></p><div class="bar"><i style="width:18.1%"></i></div></div>
      </section>
    </aside>
  </section>

  <section class="info">
    <h2 class="i-title">Information</h2>
    <div class="i-line i-cons"><h2><u>Consumption</u></h2><span>5,2 / 7</span></div>
    <div class="ibar big"><i style="width:252px"></i><s></s></div>
    <p class="i-sub">Fahrverhalten</p>
    <dl class="drive">
      <dt>Speed:</dt><dd><em>100</em> / 90</dd>
      <dt><u>Acceleration</u>:</dt><dd><em>5m/s2</em></dd>
      <dt><u>Ecolevel:</u></dt><dd>78%</dd>
    </dl>
    <p class="i-sub2">Truck <u>Condition</u></p>
    <dl class="cond">
      <dt>Type:</dt><dd>Sattelzug</dd>
      <dt>Baujahr:</dt><dd>2002</dd>
      <dt><u>Mass</u>:</dt><dd>7.5t</dd>
      <dt>Engine <u>Eff.</u>:</dt><dd><em>1/3</em></dd>
      <dt><u>Tires Eff.</u>:</dt><dd class="y">2/3</dd>
    </dl>
    <div class="i-line i-serv"><span>Service</span><span>In 466 km</span></div>
    <div class="ibar small"><i style="width:253px"></i><s></s></div>
  </section>

  <div class="mark mark-filters"></div>
  <div class="mark mark-eco"></div>
  <svg class="link" viewBox="0 0 378 18"><path d="M0 9h362" stroke="#000" stroke-opacity=".6" stroke-width="2"/><path d="M361 1l16 8-16 8z"/></svg>
</main>
</body>
</html>
```
FILE: styles.css
```css
* { box-sizing: border-box; margin: 0; padding: 0; }
body { background: #fff; font-family: "Liberation Sans", Arial, sans-serif; color: #151b54; }
.defs { position: absolute; }
svg { display: block; fill: currentColor; flex: none; }
h1, h2, h3 { font-weight: 400; }
s, i, em { text-decoration: none; font-style: normal; }

.board { position: relative; width: 2532px; height: 1264px; padding: 50px 0 0 18px; display: flex; align-items: flex-start; overflow: hidden; }
.window { display: flex; width: 1893px; height: 1127px; border: solid #388ee8; border-width: 4px 4px 4px 0; background: #28446b; box-shadow: 3px 3px 0 #e8e4e4; flex: none; overflow: hidden; }

/* navigation */
.nav { width: 94px; background: #131b56; color: #fff; }
.logo { height: 88px; padding: 21px 0 0 7px; }
.logo span { display: block; width: 69px; height: 20px; padding-left: 4px; font-size: 14.500px; line-height: 18px; letter-spacing: 2.100px; text-decoration: underline; text-underline-offset: 2px; text-decoration-thickness: 1px; border-bottom: 1px solid #aab; }
.nav-item { display: flex; flex-direction: column; align-items: center; height: 92px; padding-right: 10px; font-size: 12px; line-height: 14px; letter-spacing: 2.400px; color: #5a5f8c; }
.nav-item span { padding-left: 2px; }
.nav-item.active { background: #5bc8e6; color: #c5f1fb; padding-top: 32px; }
.active svg { width: 28px; height: 25px; margin-bottom: 5px; color: #fff; }
.detail { padding-top: 45px; height: 137px; }
.ic-line { width: 23px; height: 13px; margin-bottom: 10px; }
.history { padding-top: 1px; }
.ic-hist { width: 22px; height: 19px; margin-bottom: 10px; }

/* vehicle list panel */
.side { position: relative; z-index: 1; width: 484px; height: 1119px; flex: none; background: #eef3f8; border-radius: 0 30px 0 0; overflow: hidden; }
.side-head { height: 337px; padding-left: 34px; background: #fff; border-radius: 0 0 30px 30px; box-shadow: 0 2px 5px rgba(40,60,90,.3); }
.live { display: flex; height: 127px; padding-top: 33px; }
.live-icon { width: 64.500px; height: 65px; padding: 21px 18px; background: #5bc8e6; border-radius: 21px; color: #fff; }
.live-icon svg { width: 29px; height: 25px; }
.live-title { margin: 3px 0 0 20px; width: 78px; }
.date { display: block; font-size: 14.300px; line-height: 16px; color: #4fd4ec; -webkit-text-stroke: .3px; }
h1 { font-size: 32px; font-weight: 700; line-height: 32px; margin-top: -2.500px; }
.live-dot { width: 15px; height: 15px; margin-top: 36.500px; border-radius: 50%; background: #5bc8e6; }
.time { margin: 34px 0 0 7px; font-size: 14.300px; line-height: 16px; color: #4fd4ec; -webkit-text-stroke: .3px; }
.clear { display: flex; height: 14px; font-size: 12.400px; line-height: 14px; color: #2a2f66; }
.clear svg { width: 8px; height: 8px; margin: 6px 5px 0 1px; }
.frow { display: flex; gap: 27px; height: 33px; }
.r1 { margin-top: 25px; }
.r2 { margin: 21px 0 0 1px; }
.r3 { margin: 29px 0 0 1px; height: 31px; }
.sel { display: flex; justify-content: space-between; width: 200.500px; padding: 4px 23px 0 18px; background: #eef3f8; border-radius: 6px; font-size: 14.500px; line-height: 17px; color: #262c66; -webkit-text-stroke: .2px; }
.sel.b { width: 184px; padding: 4px 12px 0 15px; }
.r2 .sel { padding-top: 8px; }
.sel svg { width: 13px; height: 8px; margin-top: 11px; }
.r2 .sel svg { margin-top: 10.500px; }
.r3 .sel svg { margin-top: 10px; }

.list { display: flex; flex-direction: column; gap: 15.600px; padding: 33px 0 0 35px; }
.card { display: flex; align-items: flex-start; width: 414px; height: 80px; padding-left: 36px; background: #fcfdfe; border-radius: 12px; flex: none; }
.card.selected { box-shadow: 0 3px 5px rgba(60,75,95,.28); }
.nl { margin-left: -1.500px; } .nr { margin-left: 1.500px; } .nl2 { margin-left: -2.300px; }
.veh { width: 155px; padding-top: 7.500px; white-space: nowrap; }
.veh span { display: block; font-size: 12px; line-height: 14px; color: #4fd4ec; -webkit-text-stroke: .3px; }
.veh b { display: block; margin: 1px 0 5.500px; font-size: 18.400px; line-height: 20px; }
.veh .route { font-size: 12.400px; }
.pill { display: flex; align-items: center; width: 70.500px; height: 20.700px; margin-top: 27px; padding: 0 0 2px 20px; border-radius: 11px; background: radial-gradient(circle 4px at 11px 10.700px, #50c4e2 3.700px, transparent 4.200px), #dcf6fb; color: #62b6ce; font-size: 10.500px; font-weight: 700; line-height: 14px; white-space: nowrap; }
.pill.stop { background: radial-gradient(circle 4px at 11px 10.700px, #ee3124 3.700px, transparent 4.200px), #f9d9da; color: #e5343c; font-size: 10.200px; }
.counts { width: 80px; margin-left: 41px; padding-top: 18.500px; font-size: 14.500px; line-height: 16px; }
.counts p { display: flex; height: 21px; }
.counts svg { margin-right: 5px; }
.counts .w { width: 13px; height: 11.500px; margin-top: 6px; }
.counts .l { width: 11px; height: 9.700px; margin: 7.500px 8px 0 0; }
.counts .off { color: #dcf7fb; }
.go { width: 12px; height: 8px; margin-top: 35.700px; color: #c2c2c2; }

/* map */
.map { width: 893px; height: 1119px; flex: none; overflow: visible; }
.minor path, .major path { fill: none; stroke: #1e3d5a; stroke-width: 1.500; stroke-linejoin: round; vector-effect: non-scaling-stroke; }
.minor path.t { stroke-width: 1.100; stroke-opacity: .85; }
.major path { stroke-width: 2.500; stroke: #1c3a56; }
.labels { font: 24.500px Roboto, sans-serif; fill: #a6a8ac; stroke: #28446b; stroke-width: 2px; paint-order: stroke; }
.labels .m { font-size: 26.500px; }
.labels .xl { font-size: 30px; font-weight: 500; fill: #b5b5b3; }
.credit { font-size: 20px; fill: #5b6068; }

/* vehicle detail panel */
.detailp { position: relative; z-index: 1; width: 418px; height: 1119px; flex: none; background: #eef3f8; border-radius: 30px 0 0 0; overflow: hidden; }
.dp-head { height: 152px; padding: 19px 0 0 31px; background: #fcfdfe; border-radius: 0 0 32px 32px; box-shadow: 0 2px 5px rgba(40,60,90,.3); }
.close { width: 14.500px; height: 14px; margin-left: 1px; color: #bfbfbf; }
.dp-row { display: flex; margin-top: 25px; }
.truck { width: 43px; height: 43px; padding: 15.500px 12px 0 13px; border-radius: 19px; background: #5bc8e6; color: #fff; }
.truck svg { width: 19px; height: 15px; }
.dp-title { width: 207px; margin: -7px 0 0 28px; display: flex; flex-direction: column; }
.cy { font-size: 12.100px; line-height: 14px; color: #4fd4ec; -webkit-text-stroke: .4px; }
.dp-title b { font-size: 28.600px; line-height: 30px; }
.gr { margin-top: 12px; font-size: 14.300px; line-height: 16px; color: #c8c8c8; }
.dp-row .pill { margin-top: 21px; }
h2 { font-size: 24.500px; line-height: 26px; }

.box { width: 349px; margin-left: 32px; background: #fcfdfe; border-radius: 28px; }
.trip { display: flex; height: 204px; margin-top: 35px; padding-left: 30px; }
.track { width: 22px; padding-top: 45.500px; }
.track i { display: block; width: 22px; height: 22px; border: 3px solid #d4d4d4; border-radius: 50%; }
.track i.on { border: 4px solid #5bc8e6; }
.track s { display: block; width: 2px; height: 73px; margin-left: 10px; background: repeating-linear-gradient(#d4d4d4 0 4px, transparent 4px 9.500px); }
.stops { margin-left: 39px; }
.stops span { display: block; font-size: 14.400px; line-height: 16px; }
.stops p { display: flex; font-size: 14.200px; line-height: 16px; }
.stops svg { width: 12px; height: 12px; margin: 4px 7px 0 0; }
.stop1 { padding-top: 21px; color: #c8c8c8; }
.stop1 h2 { margin-top: -2px; }
.stop1 p { margin-top: 9px; }
.stop2 { padding-top: 36px; color: #4fd4ec; -webkit-text-stroke: .35px; }
.stop2 h2 { margin-top: -4px; color: #151b54; -webkit-text-stroke: 0; }
.stop2 p { margin-top: 11px; }
.warnings { display: flex; height: 153px; margin-top: 36px; padding-left: 31px; }
.wicons .w { width: 22px; height: 21px; margin-top: 28px; }
.wicons .r { width: 19px; height: 18px; margin: 22px 0 0 6px; color: #5bc8e6; }
.wtext { margin-left: 36px; padding-top: 15px; }
h3 { margin-top: 13px; font-size: 16.400px; line-height: 18px; color: #4fd4ec; -webkit-text-stroke: .35px; }
.wtext p { font-size: 12.400px; line-height: 14.500px; color: #acacac; }
.wtext h3 + p { margin-top: 7px; }
.eco { height: 337px; margin: 27.500px 0 0 33px; padding-left: 29px; }
.eco-head { display: flex; height: 94.500px; }
.eco-head svg { width: 26px; height: 23px; margin-top: 33px; }
.eco-head h2 { margin: 21px 0 0 38px; }
.meter { width: 252px; height: 74.700px; margin-left: 4px; }
.meter.first { margin-left: 1px; }
.meter p { display: flex; justify-content: space-between; height: 36.500px; font-size: 16.500px; line-height: 18px; color: #2a3068; }
.meter em { font-size: 12.400px; line-height: 20px; color: #4fd4ec; -webkit-text-stroke: .2px; }
.bar { height: 8.500px; background: #eff3f9; }
.bar i { display: block; height: 8.500px; background: #5bc8e6; border-radius: 1.500px; }

/* annotation sheet */
.info { width: 466px; height: 653px; margin: 325px 0 0 118px; padding: 20px 29px 0 47px; border: 1.400px solid #222; background: #fff; color: #1c1c1c; font-family: Lato, "Open Sans", sans-serif; font-size: 14.900px; flex: none; }
.info h2 { font-size: 22px; line-height: 28px; }
.info u { text-decoration: underline wavy #dd4a45 1px; text-underline-offset: 2px; text-decoration-skip-ink: none; }
.info em { color: #d9412f; }
.i-line { display: flex; justify-content: space-between; padding-right: 9px; }
.i-cons { height: 49.500px; margin-top: 55.500px; }
.i-cons span { line-height: 20px; margin-top: .5px; }
.ibar { display: flex; margin-left: -8px; }
.ibar i { background: #4a72c4; margin: 1px 1px 1px 0; }
.ibar s { flex: 1; border: 1.400px solid #222; border-left: 0; }
.big { height: 30px; }
.i-sub { margin-top: 39px; line-height: 20px; }
dl { display: grid; grid-template-columns: 96px 1fr; line-height: 20px; }
.drive { margin-top: 17.500px; grid-auto-rows: 24.200px; }
.i-sub2 { margin: 45.500px 0 0 -2px; line-height: 20px; }
.cond { margin-top: 5.500px; grid-template-rows: 26px 28px 23.500px 24px 24px; }
.y { color: #f3bd3a; }
.i-serv { line-height: 20px; margin-top: 28px; }
.small { height: 15px; margin: 3.500px 0 0 -10px; }

/* highlights */
.mark { position: absolute; border: 12px solid #eb3323; z-index: 2; }
.mark-filters { left: 105px; top: 171px; width: 500px; height: 233px; }
.mark-eco { left: 1521px; top: 735px; width: 329px; height: 234px; }
.link { position: absolute; left: 1681px; top: 828px; width: 378px; height: 18px; fill: #000; z-index: 3; }
```
